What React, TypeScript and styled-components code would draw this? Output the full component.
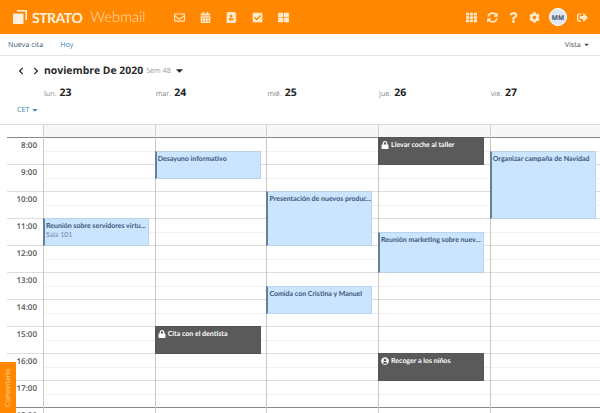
import React from 'react';
import styled, { createGlobalStyle } from 'styled-components';
import {
  FaCalendarAlt,
  FaCaretDown,
  FaCheckSquare,
  FaChevronLeft,
  FaChevronRight,
  FaCog,
  FaLock,
  FaQuestion,
  FaRegEnvelope,
  FaSignOutAlt,
  FaSyncAlt,
  FaTh,
  FaThLarge,
  FaUserCircle,
  FaAddressBook,
} from 'react-icons/fa';

const HOUR = 27;

const GlobalStyle = createGlobalStyle`
  html, body {
    margin: 0;
    padding: 0;
    height: 100%;
    overflow: hidden;
    background: #fff;
    font-family: "Open Sans", "Liberation Sans", sans-serif;
    text-rendering: geometricPrecision;
  }
`;

const Page = styled.div`
  position: relative;
  width: 600px;
  height: 413px;
  overflow: hidden;
`;

const Header = styled.header`
  display: flex;
  align-items: center;
  height: 34px;
  background: #ff8800;
  color: #ffe9cc;
`;

const Logo = styled.div`
  display: flex;
  align-items: center;
  width: 173px;
  padding-left: 12px;
  box-sizing: border-box;
  white-space: nowrap;
`;

const LogoMark = styled.svg`
  width: 16px;
  height: 16px;
  margin-right: 4px;
`;

const Brand = styled.span`
  font-family: Lato, "Open Sans", sans-serif;
  font-size: 14px;
  font-weight: 700;
  letter-spacing: -0.5px;
  color: #fff1de;
`;

const Product = styled.span`
  margin-left: 8px;
  font-family: Lato, "Open Sans", sans-serif;
  font-size: 14.7px;
  font-weight: 300;
  color: #ffdcae;
`;

const NavGroup = styled.nav`
  display: flex;
  align-items: center;
  gap: 14px;
`;

const UserGroup = styled(NavGroup)`
  margin-left: auto;
  padding-right: 12px;
  gap: 9px;
`;

const NavIcon = styled.span`
  display: flex;
  justify-content: center;
  align-items: center;
  width: 12px;
  height: 12px;
  font-size: 11px;
`;

const Avatar = styled.span`
  display: flex;
  justify-content: center;
  align-items: center;
  width: 18px;
  height: 18px;
  box-sizing: border-box;
  border: 1.5px solid #fff;
  border-radius: 50%;
  background: #dfe7f5;
  color: #3b4a66;
  font-size: 6.5px;
  font-weight: 700;
`;

const Toolbar = styled.div`
  display: flex;
  align-items: center;
  height: 21px;
  padding: 0 10px 0 8px;
  border-bottom: 1px solid #e4e4e4;
  font-size: 7.2px;
`;

const ToolbarLink = styled.span<{ $active?: boolean }>`
  margin-right: 17px;
  color: ${(p) => (p.$active ? '#3c87b8' : '#3d5a73')};
`;

const ViewMenu = styled.span`
  display: flex;
  align-items: center;
  gap: 2px;
  margin-left: auto;
  color: #555;
`;

const TitleRow = styled.div`
  display: flex;
  align-items: center;
  height: 28px;
  padding: 1px 0 0 17px;
  box-sizing: border-box;
  color: #222;
`;

const Arrow = styled.span`
  display: flex;
  width: 15px;
  font-size: 8px;
`;

const MonthTitle = styled.h1`
  margin: 0 3px 0 -3px;
  font-size: 10.4px;
  font-weight: 700;
  color: #2a2a2a;
`;

const WeekLabel = styled.span`
  margin-right: 3px;
  font-size: 7.2px;
  color: #999;
`;

const DayHeader = styled.div`
  display: grid;
  grid-template-columns: 43px repeat(5, 111.7px);
  height: 14px;
`;

const DayTitle = styled.div`
  display: flex;
  align-items: baseline;
  gap: 3px;
  padding: 2px 0 0 1px;
`;

const DayName = styled.span`
  font-size: 7.2px;
  color: #888;
`;

const DayNumber = styled.span`
  font-size: 10.5px;
  font-weight: 700;
  color: #222;
`;

const ZoneRow = styled.div`
  display: flex;
  align-items: center;
  gap: 2px;
  height: 26px;
  padding: 0 0 2px 17px;
  box-sizing: border-box;
  font-size: 7.2px;
  color: #3c87b8;
`;

const Grid = styled.div`
  display: grid;
  grid-template-columns: 36px repeat(5, 111.7px);
  padding-left: 7px;
`;

const AllDayGutter = styled.div`
  height: 12px;
  margin-left: -7px;
  padding-left: 7px;
  border-top: 1px solid #ddd;
`;

const AllDayCell = styled.div`
  height: 12px;
  border-top: 1px solid #ddd;
  border-left: 1px solid #d0d0d0;
  background: #f7f7f7;
`;

const TimeLabel = styled.div<{ $strong?: boolean }>`
  height: ${HOUR}px;
  box-sizing: border-box;
  padding: 2px 6px 0 0;
  border-top: 1px solid ${(p) => (p.$strong ? '#888' : '#ddd')};
  text-align: right;
  font-size: 8px;
  font-weight: 600;
  color: #555;
`;

const DayColumn = styled.div`
  position: relative;
  border-left: 1px solid #c8c8c8;
`;

const Slot = styled.div<{ $strong?: boolean }>`
  height: ${HOUR}px;
  box-sizing: border-box;
  border-top: 1px solid ${(p) => (p.$strong ? '#888' : '#ddd')};
  background: linear-gradient(#f1f1f1, #f1f1f1) 0 13px / 100% 1px no-repeat;
`;

const Event = styled.div<{ $dark?: boolean; $top: number; $span: number }>`
  position: absolute;
  top: ${(p) => p.$top * HOUR}px;
  left: -1px;
  width: 106px;
  height: ${(p) => p.$span * HOUR + 1}px;
  box-sizing: border-box;
  padding: 3px 2px 2px 1px;
  border: 1px solid ${(p) => (p.$dark ? '#555' : '#b9d3ec')};
  border-left: 2px solid ${(p) => (p.$dark ? '#555' : '#64809c')};
  background: ${(p) => (p.$dark ? '#5a5a5a' : '#cce5ff')};
  color: ${(p) => (p.$dark ? '#fff' : '#3a5578')};
  font-family: Lato, "Open Sans", sans-serif;
  font-size: 7px;
  overflow: hidden;
`;

const EventTitle = styled.div`
  display: flex;
  align-items: center;
  gap: 1px;
  font-weight: 700;
  white-space: nowrap;
`;

const EventIcon = styled.span`
  display: flex;
  font-size: 8px;
  margin-right: 1px;
`;

const EventRoom = styled.div`
  margin-top: 1px;
  color: #6f879f;
`;

const FeedbackTab = styled.div`
  position: absolute;
  left: 0;
  bottom: 0;
  display: flex;
  justify-content: center;
  align-items: center;
  width: 16px;
  height: 51px;
  background: #ff8800;
  color: #ffd7a0;
  font-size: 7px;
  writing-mode: vertical-rl;
  transform: rotate(180deg);
`;

type CalendarEvent = {
  title: string;
  top: number;
  span: number;
  dark?: boolean;
  room?: string;
  icon?: React.ReactNode;
};

const hours = ['8:00', '9:00', '10:00', '11:00', '12:00', '13:00', '14:00', '15:00', '16:00', '17:00', '18:00'];

const days: { name: string; number: string; events: CalendarEvent[] }[] = [
  {
    name: 'lun.',
    number: '23',
    events: [{ title: 'Reunión sobre servidores virtu...', room: 'Sala 101', top: 3, span: 1 }],
  },
  {
    name: 'mar.',
    number: '24',
    events: [
      { title: 'Desayuno informativo', top: 0.5, span: 1 },
      { title: 'Cita con el dentista', top: 7, span: 1, dark: true, icon: <FaLock /> },
    ],
  },
  {
    name: 'mié.',
    number: '25',
    events: [
      { title: 'Presentación de nuevos produc...', top: 2, span: 2 },
      { title: 'Comida con Cristina y Manuel', top: 5.5, span: 1 },
    ],
  },
  {
    name: 'jue.',
    number: '26',
    events: [
      { title: 'Llevar coche al taller', top: 0, span: 1, dark: true, icon: <FaLock /> },
      { title: 'Reunión marketing sobre nuev...', top: 3.5, span: 1.5 },
      { title: 'Recoger a los niños', top: 8, span: 1, dark: true, icon: <FaUserCircle /> },
    ],
  },
  {
    name: 'vie.',
    number: '27',
    events: [{ title: 'Organizar campaña de Navidad', top: 0.5, span: 2.5 }],
  },
];

const mainNav = [FaRegEnvelope, FaCalendarAlt, FaAddressBook, FaCheckSquare, FaThLarge];

export default function App() {
  return (
    <Page>
      <GlobalStyle />
      <Header>
        <Logo>
          <LogoMark viewBox="0 0 16 16">
            <path d="M5 1h10v10h-1.6V2.6H5z" fill="#fff1de" />
            <path d="M1 4.5h10.5V15H1z" fill="#fff1de" />
          </LogoMark>
          <Brand>STRATO</Brand>
          <Product>Webmail</Product>
        </Logo>
        <NavGroup>
          {mainNav.map((Icon, i) => (
            <NavIcon key={i}>
              <Icon />
            </NavIcon>
          ))}
        </NavGroup>
        <UserGroup>
          <NavIcon><FaTh /></NavIcon>
          <NavIcon><FaSyncAlt /></NavIcon>
          <NavIcon><FaQuestion /></NavIcon>
          <NavIcon><FaCog /></NavIcon>
          <Avatar>MM</Avatar>
          <NavIcon><FaSignOutAlt /></NavIcon>
        </UserGroup>
      </Header>
      <Toolbar>
        <ToolbarLink>Nueva cita</ToolbarLink>
        <ToolbarLink $active>Hoy</ToolbarLink>
        <ViewMenu>
          Vista <FaCaretDown />
        </ViewMenu>
      </Toolbar>
      <TitleRow>
        <Arrow><FaChevronLeft /></Arrow>
        <Arrow><FaChevronRight /></Arrow>
        <MonthTitle>noviembre De 2020</MonthTitle>
        <WeekLabel>Sem 48</WeekLabel>
        <FaCaretDown size={11} />
      </TitleRow>
      <DayHeader>
        <span />
        {days.map((d) => (
          <DayTitle key={d.number}>
            <DayName>{d.name}</DayName>
            <DayNumber>{d.number}</DayNumber>
          </DayTitle>
        ))}
      </DayHeader>
      <ZoneRow>
        CET <FaCaretDown size={8} />
      </ZoneRow>
      <Grid>
        <AllDayGutter />
        {days.map((d) => (
          <AllDayCell key={d.number} />
        ))}
        <div>
          {hours.map((h, i) => (
            <TimeLabel key={h} $strong={i === 0 || i === 10}>{h}</TimeLabel>
          ))}
        </div>
        {days.map((d) => (
          <DayColumn key={d.number}>
            {hours.map((h, i) => (
              <Slot key={h} $strong={i === 0 || i === 10} />
            ))}
            {d.events.map((e) => (
              <Event key={e.title} $dark={e.dark} $top={e.top} $span={e.span}>
                <EventTitle>
                  {e.icon && <EventIcon>{e.icon}</EventIcon>}
                  {e.title}
                </EventTitle>
                {e.room && <EventRoom>{e.room}</EventRoom>}
              </Event>
            ))}
          </DayColumn>
        ))}
      </Grid>
      <FeedbackTab>Comentario</FeedbackTab>
    </Page>
  );
}
